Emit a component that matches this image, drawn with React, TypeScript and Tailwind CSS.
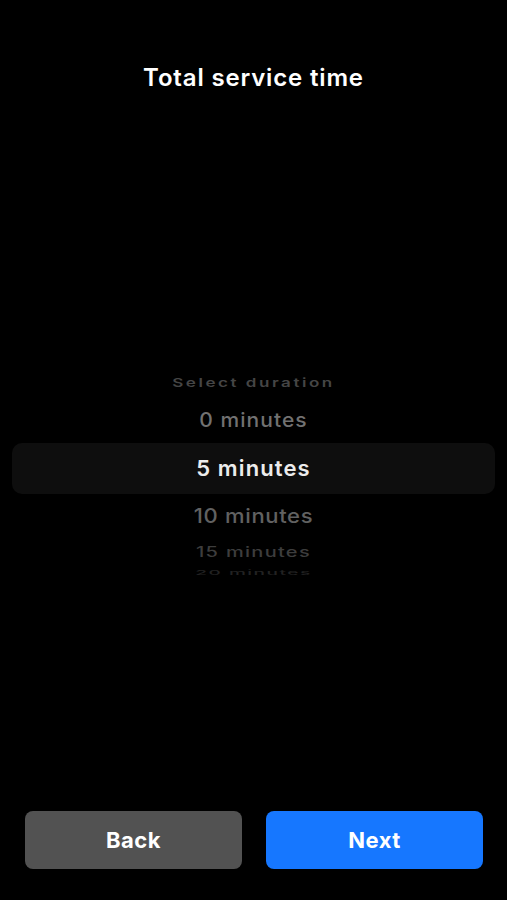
import React from "react";

const font = { fontFamily: "Inter, 'Noto Sans', sans-serif" };

export default function App() {
  return (
    <div className="w-[507px] h-[900px] bg-black flex flex-col" style={font}>
      <h1 className="pt-[63px] text-center text-white text-[24px] leading-[30px] font-semibold tracking-[0.035em]">
        Total service time
      </h1>

      <div className="mt-[277px] flex flex-col">
        <div className="h-[26px] flex items-center justify-center">
          <span className="text-[17px] font-semibold tracking-[0.15em] text-[#454545] scale-y-[0.72]">
            Select duration
          </span>
        </div>
        <div className="h-[47px] flex items-center justify-center">
          <span className="text-[21px] font-medium tracking-[0.05em] text-[#717171] scale-y-[0.95]">0 minutes</span>
        </div>
        <div className="mx-[12px] h-[51px] rounded-[10px] bg-[#0e0e0e] flex items-center justify-center">
          <span className="text-[22px] font-semibold tracking-[0.05em] text-[#ececec]">5 minutes</span>
        </div>
        <div className="h-[44px] flex items-center justify-center">
          <span className="text-[22px] font-medium tracking-[0.03em] text-[#616161] scale-y-[0.92]">10 minutes</span>
        </div>
        <div className="h-[28px] flex items-center justify-center">
          <span className="text-[20px] font-medium tracking-[0.065em] text-[#3d3d3d] scale-y-[0.7]">15 minutes</span>
        </div>
        <div className="h-[14px] flex items-center justify-center overflow-hidden">
          <span className="text-[19px] font-medium tracking-[0.08em] text-[#222222] scale-y-[0.35]">20 minutes</span>
        </div>
      </div>

      <div className="flex-1" />

      <div className="flex gap-[24px] pl-[25px] pr-[24px] pb-[31px]">
        <button className="flex-1 h-[58px] rounded-[8px] bg-[#525252] text-white text-[22px] font-bold tracking-[0.02em]">
          Back
        </button>
        <button className="flex-1 h-[58px] rounded-[8px] bg-[#1677ff] text-white text-[22px] font-bold tracking-[0.02em]">
          Next
        </button>
      </div>
    </div>
  );
}
